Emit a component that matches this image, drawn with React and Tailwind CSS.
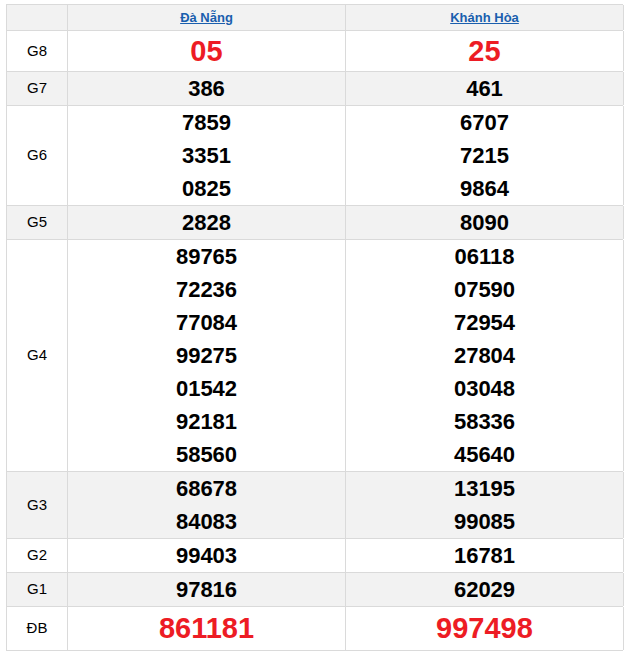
import React from 'react';

const rows = [
  { label: 'G8', a: ['05'], b: ['25'], big: true, h: 'leading-[40px]' },
  { label: 'G7', a: ['386'], b: ['461'], gray: true },
  { label: 'G6', a: ['7859', '3351', '0825'], b: ['6707', '7215', '9864'] },
  { label: 'G5', a: ['2828'], b: ['8090'], gray: true },
  {
    label: 'G4',
    a: ['89765', '72236', '77084', '99275', '01542', '92181', '58560'],
    b: ['06118', '07590', '72954', '27804', '03048', '58336', '45640'],
  },
  { label: 'G3', a: ['68678', '84083'], b: ['13195', '99085'], gray: true },
  { label: 'G2', a: ['99403'], b: ['16781'] },
  { label: 'G1', a: ['97816'], b: ['62029'], gray: true },
  { label: 'ĐB', a: ['861181'], b: ['997498'], big: true, h: 'leading-[43px]' },
];

const Cell = ({ nums, big, h }) => (
  <div className="flex flex-col items-center justify-center border-r border-[#dadada]">
    {nums.map((n, i) => (
      <div
        key={i}
        className={
          big
            ? `text-[29px] font-bold text-[#ed1c24] ${h}`
            : 'text-[22px] font-bold text-black leading-[33px]'
        }
      >
        {n}
      </div>
    ))}
  </div>
);

const App = () => {
  return (
    <div className="pl-[6px] pt-[4px] bg-white" style={{ fontFamily: '"Liberation Sans", Arial, sans-serif' }}>
      <div className="w-[617px] border-t border-l border-[#dadada]">
        <div className="grid grid-cols-[61px_278px_278px] bg-[#f2f2f2] border-b border-[#dadada]">
          <div className="border-r border-[#dadada] h-[25px]"></div>
          <div className="border-r border-[#dadada] flex items-center justify-center">
            <a href="#" className="text-[13px] font-bold text-[#1a5fae] underline">Đà Nẵng</a>
          </div>
          <div className="border-r border-[#dadada] flex items-center justify-center">
            <a href="#" className="text-[13px] font-bold text-[#1a5fae] underline">Khánh Hòa</a>
          </div>
        </div>
        {rows.map((r) => (
          <div
            key={r.label}
            className={`grid grid-cols-[61px_278px_278px] border-b border-[#dadada] ${r.gray ? 'bg-[#f2f2f2]' : 'bg-white'}`}
          >
            <div className="border-r border-[#dadada] flex items-center justify-center text-[15px] text-black">
              {r.label}
            </div>
            <Cell nums={r.a} big={r.big} h={r.h} />
            <Cell nums={r.b} big={r.big} h={r.h} />
          </div>
        ))}
      </div>
    </div>
  );
};

export default App;
